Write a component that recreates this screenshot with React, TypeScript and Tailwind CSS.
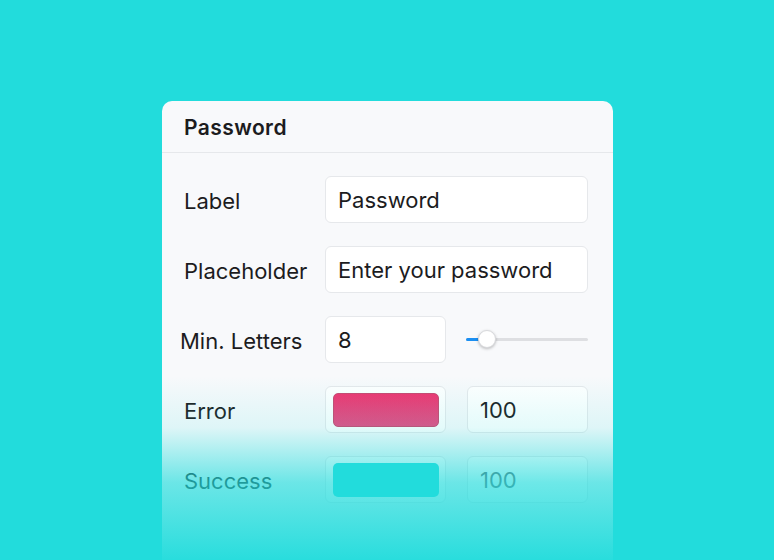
const font = { fontFamily: "Inter, 'Noto Sans', sans-serif" };

function TextBox({ value, className = "" }: { value: string; className?: string }) {
    return (
        <div
            className={`flex h-[47px] items-center rounded-[6px] border border-[#e6e8eb] bg-white px-3 pt-[2px] text-[22px] text-[#1c1c1e] ${className}`}
        >
            {value}
        </div>
    );
}

function Row({ label, children, labelClass = "pl-[22px]" }: { label: string; children: React.ReactNode; labelClass?: string }) {
    return (
        <div className="flex h-[47px] items-center">
            <div className={`w-[163px] shrink-0 whitespace-nowrap pt-[3px] text-[22px] text-[#1c1c1e] ${labelClass}`}>{label}</div>
            {children}
        </div>
    );
}

function Swatch({ color }: { color: string }) {
    return (
        <div className="flex h-[47px] w-[121px] items-center justify-center rounded-[6px] border border-[#e6e8eb] bg-white">
            <div className={`h-[34px] w-[106px] rounded-[5px] ${color}`} />
        </div>
    );
}

export default function App() {
    return (
        <div className="flex h-[560px] w-[774px] overflow-hidden bg-[#22dcdc] pl-[162px] pt-[101px]" style={font}>
            <div className="relative flex w-[451px] flex-col rounded-t-[10px] bg-[#f8f9fb]">
                <div className="flex h-[52px] items-center border-b border-[#e6e8eb] px-[22px] pt-[3px] text-[21px] font-semibold tracking-[0.02em] text-[#1c1c1e]">
                    Password
                </div>

                <div className="flex flex-col gap-[23px] pt-[23px]">
                    <Row label="Label">
                        <TextBox value="Password" className="w-[263px]" />
                    </Row>
                    <Row label="Placeholder">
                        <TextBox value="Enter your password" className="w-[263px]" />
                    </Row>
                    <Row label="Min. Letters" labelClass="pl-[18px]">
                        <div className="flex items-center">
                            <TextBox value="8" className="w-[121px]" />
                            <div className="relative ml-[20px] h-[3px] w-[122px] rounded-full bg-[#dedfe2]">
                                <div className="absolute left-0 top-0 h-[3px] w-[20px] rounded-full bg-[#1b8ff2]" />
                                <div className="absolute left-[12px] top-[-8px] h-[18px] w-[18px] rounded-full border border-[#d8d9dc] bg-white shadow-[0_1px_3px_rgba(0,0,0,0.25)]" />
                            </div>
                        </div>
                    </Row>
                    <Row label="Error">
                        <div className="flex items-center gap-[21px]">
                            <Swatch color="border border-[#c9476f] bg-gradient-to-b from-[#ef3470] to-[#e64a82]" />
                            <TextBox value="100" className="w-[121px]" />
                        </div>
                    </Row>
                    <Row label="Success">
                        <div className="flex items-center gap-[21px]">
                            <Swatch color="bg-[#22dcdc]" />
                            <TextBox value="100" className="w-[121px] text-[#5f646b]" />
                        </div>
                    </Row>
                </div>

                <div className="pointer-events-none absolute inset-x-0 bottom-0 top-[275px] bg-[linear-gradient(to_bottom,rgba(34,220,220,0)_0%,rgba(34,220,220,0.12)_28%,rgba(34,220,220,0.66)_58%,rgba(34,220,220,0.97)_100%)]" />
            </div>
        </div>
    );
}
